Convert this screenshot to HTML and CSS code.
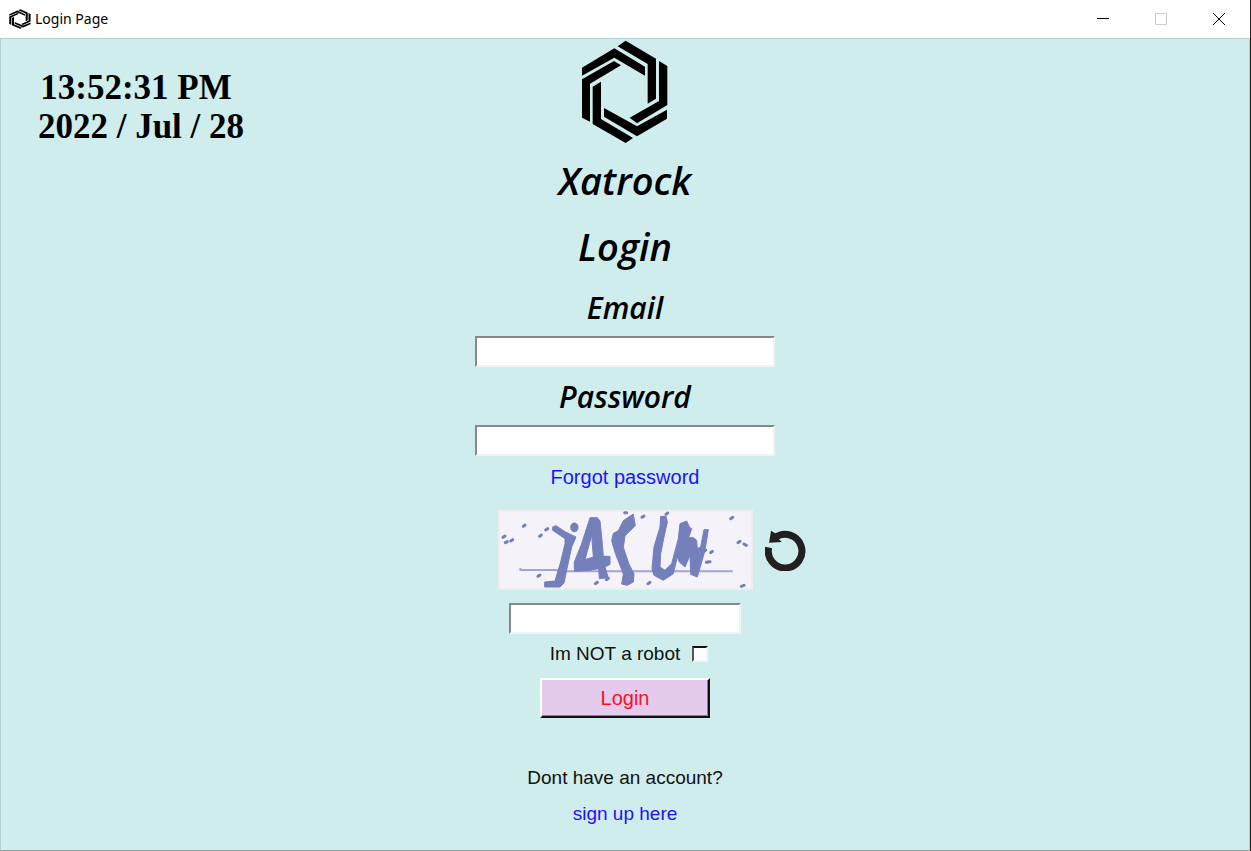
FILE: index.html
```html
<!DOCTYPE html>
<html lang="en">
<head>
<meta charset="utf-8">
<title>Login Page</title>
<link rel="stylesheet" href="styles.css">
</head>
<body>
<div class="window">
  <header class="titlebar">
    <svg class="titlebar-icon" viewBox="48 12 264 312" preserveAspectRatio="none" aria-hidden="true"><use href="#mark"/></svg>
    <span class="titlebar-text">Login Page</span>
    <div class="controls">
      <button class="control" type="button" aria-label="Minimize"><svg viewBox="0 0 12 12"><path d="M0 5.5H12"/></svg></button>
      <button class="control" type="button" aria-label="Maximize" disabled><svg viewBox="0 0 12 12"><path d="M.5 .5H11.5V11.5H.5Z"/></svg></button>
      <button class="control" type="button" aria-label="Close"><svg viewBox="0 0 12 12"><path d="M0 0L12 12M12 0L0 12"/></svg></button>
    </div>
  </header>
  <main class="content">
    <div class="clock">
      <time>13:52:31 PM</time>
      <time>2022 / Jul / 28</time>
    </div>
    <form class="login">
      <svg class="logo" viewBox="48 12 264 312" role="img" aria-label="Xatrock logo">
        <g id="mark">
          <path d="M51 95L148 37L240 92V119L148 65L51 119Z"/>
          <path d="M158 31L182 14L273 68V188L248 203V84Z"/>
          <path d="M282 75L307 90V207L216 262L194 245L282 195Z"/>
          <path d="M117 216L216 271L306 221V248L216 301L117 242Z"/>
          <path d="M83 152L108 137V249L204 306L182 321L83 264Z"/>
          <path d="M51 130L147 75L168 88L75 143V257L51 245Z"/>
        </g>
      </svg>
      <h1 class="heading">Xatrock</h1>
      <h2 class="heading">Login</h2>
      <label class="label" for="email">Email</label>
      <input class="field" id="email" type="email">
      <label class="label" for="password">Password</label>
      <input class="field" id="password" type="password">
      <a class="link" href="#forgot">Forgot password</a>
      <div class="captcha">
        <svg class="captcha-picture" viewBox="0 0 765 240" role="img" aria-label="Captcha">
          <g class="ink">
            <path class="rule" d="M67 174V180H175L185 184H704"/>
            <g class="scribble">
              <path d="M164 51L174 47L201 65L234 81L221 111L208 171L198 219L186 231H140V216L171 213L188 156L201 101V86L164 61Z"/>
              <path fill-rule="evenodd" d="M276 23H298L306 33L312 91L316 139H336V163L321 171L331 203L304 206L302 176L276 181L229 184V156L251 101ZM281 76L286 141L261 149Z"/>
              <path d="M406 12L412 47L381 77L376 112L392 160L408 192L406 216L388 226L371 222L376 192L352 130L341 92L346 70L361 62L376 32Z"/>
              <path d="M488 19H504L508 36L498 81L488 131L486 171L501 181L521 161L541 86L546 41L566 33L574 51L581 56L572 83H586L596 91L598 116L608 111L618 59H631L621 121L598 201L578 193L576 136L561 171L544 156L538 141L526 191L496 211L468 196L462 176L468 111L486 51Z"/>
            </g>
            <ellipse cx="229" cy="52" rx="12" ry="14"/>
            <path class="dots" d="M76 49l5-4M15 82l6-4M22 98l6-3M38 93l6-4M125 79l5-4M143 60l6-4M380 8h6M432 22l6-4M504 13l5-4M698 26l6-4M720 98l6-4M738 102l7 4M638 128l5-4M618 124l5-4M625 157l11-2M120 199l6-4M292 221l6-4M325 209l6-4M450 221l6-4M730 229l8-3"/>
          </g>
        </svg>
        <button class="refresh" type="button" aria-label="New captcha">
          <svg viewBox="824 76 122 122"><path class="ring" d="M835 128A50 50 0 1 0 855 98"/><path d="M842 78L836 114L874 112L864 102L880 92L858 88Z"/></svg>
        </button>
      </div>
      <input class="field field-code" type="text" aria-label="Captcha text">
      <label class="robot">Im NOT a robot <input class="check" type="checkbox"></label>
      <button class="submit" type="submit">Login</button>
      <p class="note">Dont have an account?</p>
      <a class="link signup" href="#signup">sign up here</a>
    </form>
  </main>
</div>
</body>
</html>
```
FILE: styles.css
```css
* { box-sizing: border-box; }
body {
  margin: 0;
  font-family: "Liberation Sans", Arial, sans-serif;
  font-size: 20px;
  line-height: 24px;
  color: #111;
}
.window {
  min-height: 100vh;
  display: flex;
  flex-direction: column;
  border-right: 1px solid #222;
}
.titlebar {
  height: 38px;
  display: flex;
  align-items: center;
  padding: 0 2px 0 9px;
  background: #fff;
}
.titlebar-icon { width: 22px; height: 20px; }
.titlebar-text {
  margin-left: 4px;
  font-family: "Segoe UI", "Noto Sans", sans-serif;
  font-size: 14px;
  color: #000;
}
.controls { margin-left: auto; display: flex; }
.control {
  width: 58px;
  height: 38px;
  padding: 0;
  border: 0;
  background: none;
  display: flex;
  align-items: center;
  justify-content: center;
}
.control svg { width: 12px; height: 12px; fill: none; stroke: #000; overflow: visible; }
.control:disabled svg { stroke: #ccc; }
.content {
  flex: 1;
  display: grid;
  grid-template-columns: 1fr auto 1fr;
  background: #d0eded;
  border: 1px solid #b4cfcf;
  border-bottom-color: #8fa3a3;
}
.clock {
  padding: 29px 0 0 36px;
  font: bold 35px/39px "Liberation Serif", "Times New Roman", serif;
  color: #000;
}
.clock time { display: block; width: 208px; text-align: center; }
.clock time:first-child { width: 198px; }
.login {
  display: flex;
  flex-direction: column;
  align-items: center;
  padding: 1px 0 24px;
}
.logo { width: 88px; height: 104px; }
.heading, .label {
  font-family: "Ink Free", "Segoe Print", "Open Sans", sans-serif;
  font-style: italic;
  font-weight: 600;
  color: #000;
}
.heading { margin: 12px 0 0; font-size: 38px; line-height: 48px; }
.heading + .heading { margin-top: 18px; }
.label { margin-top: 18px; font-size: 30px; line-height: 40px; }
.field {
  width: 300px;
  height: 31px;
  margin-top: 8px;
  padding: 2px 4px;
  background: #fff;
  border: 2px solid;
  border-color: #858989 #f2f2f2 #f2f2f2 #858989;
  font: inherit;
}
.field + .label { margin-top: 10px; }
.link { margin-top: 9px; color: #1f10ff; text-decoration: none; }
.captcha {
  display: grid;
  grid-template-columns: 1fr auto 1fr;
  align-items: center;
  column-gap: 12px;
  margin-top: 21px;
}
.captcha-picture {
  grid-column: 2;
  width: 255px;
  height: 80px;
  background: #f6f2f9;
  box-shadow: inset 0 0 0 2px #efeeee;
}
.ink { fill: #7480ba; stroke: #7480ba; }
.scribble { stroke-width: 3; stroke-linejoin: round; }
.rule { fill: none; stroke-width: 6; stroke: #9fa5d2; }
.dots { fill: none; stroke-width: 9; stroke-linecap: round; }
.refresh { padding: 0; border: 0; background: none; width: 41px; height: 41px; }
.refresh svg { display: block; width: 41px; height: 41px; fill: #231f20; }
.refresh .ring { fill: none; stroke: #231f20; stroke-width: 21; }
.field-code { width: 232px; margin-top: 13px; }
.robot { display: flex; align-items: center; gap: 12px; margin-top: 8px; padding-left: 8px; font-size: 19px; }
.check {
  appearance: none;
  width: 16px;
  height: 16px;
  margin: 0;
  background: #fff;
  border: 2px solid;
  border-color: #111 #edf7f7 #edf7f7 #555;
}
.check:checked { background: #333; }
.submit {
  width: 170px;
  height: 40px;
  margin-top: 12px;
  padding: 0;
  background: #e4caed;
  border: 2px solid;
  border-color: #fff #111 #111 #fff;
  box-shadow: inset -1px -1px #8d7d93;
  font: inherit;
  color: #ff1020;
}
.note { margin: 48px 0 0; font-size: 19px; }
.signup { margin-top: 12px; font-size: 19px; }
```
